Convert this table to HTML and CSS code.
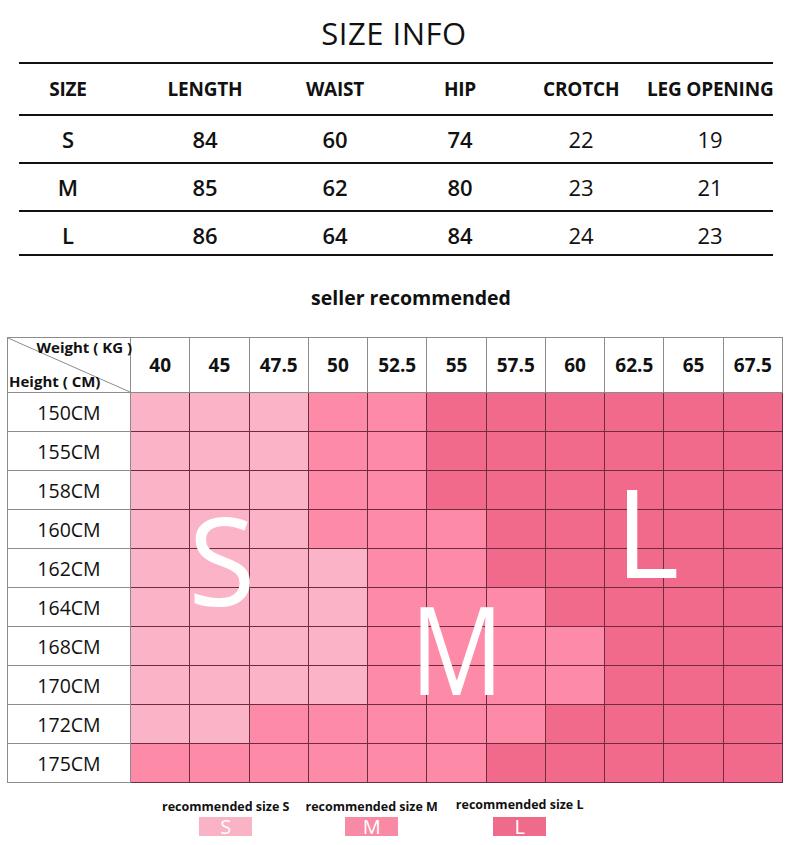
FILE: index.html
```html
<!DOCTYPE html>
<html>
<head>
<meta charset="utf-8">
<title>Size Info</title>
<link rel="stylesheet" href="styles.css">
</head>
<body>
<div class="page">
  <h1 class="title">SIZE INFO</h1>
  <div class="size-table">
    <div class="row head"><span>SIZE</span><span>LENGTH</span><span>WAIST</span><span>HIP</span><span>CROTCH</span><span>LEG OPENING</span></div>
    <div class="row"><span class="v1">S</span><span class="v1">84</span><span class="v1">60</span><span class="v1">74</span><span class="v2">22</span><span class="v2">19</span></div>
    <div class="row"><span class="v1">M</span><span class="v1">85</span><span class="v1">62</span><span class="v1">80</span><span class="v2">23</span><span class="v2">21</span></div>
    <div class="row last"><span class="v1">L</span><span class="v1">86</span><span class="v1">64</span><span class="v1">84</span><span class="v2">24</span><span class="v2">23</span></div>
  </div>

  <p class="seller">seller recommended</p>

  <div class="chart">
    <div class="corner">
      <svg class="diag" viewBox="0 0 100 100" preserveAspectRatio="none"><line x1="0" y1="0" x2="100" y2="100" stroke="#8c8c8c" stroke-width="1" vector-effect="non-scaling-stroke"/></svg>
      <span class="wt">Weight ( KG )</span>
      <span class="ht">Height ( CM)</span>
    </div>
    <div class="hd">40</div><div class="hd">45</div><div class="hd">47.5</div><div class="hd">50</div><div class="hd">52.5</div><div class="hd">55</div><div class="hd">57.5</div><div class="hd">60</div><div class="hd">62.5</div><div class="hd">65</div><div class="hd">67.5</div>

    <div class="lab">150CM</div><div class="c s"></div><div class="c s"></div><div class="c s"></div><div class="c m"></div><div class="c m"></div><div class="c l"></div><div class="c l"></div><div class="c l"></div><div class="c l"></div><div class="c l"></div><div class="c l"></div>
    <div class="lab">155CM</div><div class="c s"></div><div class="c s"></div><div class="c s"></div><div class="c m"></div><div class="c m"></div><div class="c l"></div><div class="c l"></div><div class="c l"></div><div class="c l"></div><div class="c l"></div><div class="c l"></div>
    <div class="lab">158CM</div><div class="c s"></div><div class="c s"></div><div class="c s"></div><div class="c m"></div><div class="c m"></div><div class="c l"></div><div class="c l"></div><div class="c l"></div><div class="c l"></div><div class="c l"></div><div class="c l"></div>
    <div class="lab">160CM</div><div class="c s"></div><div class="c s"></div><div class="c s"></div><div class="c m"></div><div class="c m"></div><div class="c m"></div><div class="c l"></div><div class="c l"></div><div class="c l"></div><div class="c l"></div><div class="c l"></div>
    <div class="lab">162CM</div><div class="c s"></div><div class="c s"></div><div class="c s"></div><div class="c s"></div><div class="c m"></div><div class="c m"></div><div class="c l"></div><div class="c l"></div><div class="c l"></div><div class="c l"></div><div class="c l"></div>
    <div class="lab">164CM</div><div class="c s"></div><div class="c s"></div><div class="c s"></div><div class="c s"></div><div class="c m"></div><div class="c m"></div><div class="c m"></div><div class="c l"></div><div class="c l"></div><div class="c l"></div><div class="c l"></div>
    <div class="lab">168CM</div><div class="c s"></div><div class="c s"></div><div class="c s"></div><div class="c s"></div><div class="c m"></div><div class="c m"></div><div class="c m"></div><div class="c m"></div><div class="c l"></div><div class="c l"></div><div class="c l"></div>
    <div class="lab">170CM</div><div class="c s"></div><div class="c s"></div><div class="c s"></div><div class="c s"></div><div class="c m"></div><div class="c m"></div><div class="c m"></div><div class="c m"></div><div class="c l"></div><div class="c l"></div><div class="c l"></div>
    <div class="lab">172CM</div><div class="c s"></div><div class="c s"></div><div class="c m"></div><div class="c m"></div><div class="c m"></div><div class="c m"></div><div class="c m"></div><div class="c l"></div><div class="c l"></div><div class="c l"></div><div class="c l"></div>
    <div class="lab">175CM</div><div class="c m"></div><div class="c m"></div><div class="c m"></div><div class="c m"></div><div class="c m"></div><div class="c m"></div><div class="c l"></div><div class="c l"></div><div class="c l"></div><div class="c l"></div><div class="c l"></div>

    <span class="big big-s">S</span>
    <span class="big big-m">M</span>
    <span class="big big-l">L</span>
  </div>

  <div class="legend">
    <div class="item">
      <span class="lg-label">recommended size S</span>
      <span class="swatch sw-s">S</span>
    </div>
    <div class="item item-m">
      <span class="lg-label">recommended size M</span>
      <span class="swatch sw-m">M</span>
    </div>
    <div class="item item-l">
      <span class="lg-label">recommended size L</span>
      <span class="swatch sw-l">L</span>
    </div>
  </div>
</div>
</body>
</html>
```
FILE: styles.css
```css
body {
  margin: 0;
  background: #fff;
  font-family: "Open Sans", "Noto Sans", sans-serif;
  color: #111;
}

.page {
  width: 788px;
  padding-top: 13px;
}

.title {
  margin: 0;
  font-size: 31px;
  font-weight: 400;
  line-height: 40px;
  text-align: center;
  letter-spacing: 0.5px;
}

/* ---- size table ---- */
.size-table {
  margin: 9px 0 0 19px;
  width: 754px;
  border-top: 2px solid #111;
}

.row {
  display: grid;
  grid-template-columns: 98px 176px 84px 166px 76px 154px;
  align-items: center;
  height: 46px;
  border-bottom: 2px solid #111;
  font-size: 22px;
}

.row > span {
  text-align: center;
  white-space: nowrap;
}

.row > span:last-child {
  padding-left: 28px;
}

.row.head {
  height: 50px;
  font-size: 19px;
  font-weight: 700;
  letter-spacing: -0.2px;
}

.row.last {
  height: 42px;
}

.row.last > span {
  position: relative;
  top: 2px;
}

.v1 { font-weight: 600; }
.v2 { font-weight: 400; }

/* ---- seller ---- */
.seller {
  margin: 30px 0 0;
  padding-left: 34px;
  text-align: center;
  font-size: 19.5px;
  font-weight: 700;
  line-height: 24px;
}

/* ---- chart ---- */
.chart {
  position: relative;
  margin: 27px 0 0 7px;
  width: 776px;
  box-sizing: border-box;
  border-top: 1px solid #8c8c8c;
  border-left: 1px solid #8c8c8c;
  display: grid;
  grid-template-columns: 123px repeat(11, 1fr);
  grid-template-rows: 55px repeat(10, 39px);
}

.chart > div {
  box-sizing: border-box;
  border-right: 1px solid #8c8c8c;
  border-bottom: 1px solid #8c8c8c;
}

.corner {
  position: relative;
}

.diag {
  position: absolute;
  left: 0;
  top: 0;
  width: 100%;
  height: 100%;
}

.wt, .ht {
  position: absolute;
  font-size: 15px;
  font-weight: 700;
  line-height: 18px;
  white-space: nowrap;
}

.wt { right: -2px; top: 0; }
.ht { left: 1px; bottom: 2px; }

.hd {
  display: flex;
  align-items: center;
  justify-content: center;
  font-size: 19px;
  font-weight: 700;
}

.lab {
  display: flex;
  align-items: center;
  justify-content: center;
  font-size: 19.5px;
  font-weight: 400;
}

.chart > .c {
  border-color: #6e2c40;
}

.s { background: #fab3c7; }
.m { background: #fd8aa7; }
.l { background: #f26a8b; }

.big {
  position: absolute;
  color: #fff;
  font-weight: 400;
  font-size: 123px;
  line-height: 1;
  width: 120px;
  text-align: center;
}

.big-s { left: 154px; top: 159px; }
.big-m { left: 389px; top: 248px; transform: scaleX(0.84); }
.big-l { left: 607px; top: 131px; text-align: left; }

/* ---- legend ---- */
.legend {
  display: flex;
  align-items: flex-start;
  margin-top: 16px;
  padding-left: 162px;
}

.item {
  display: flex;
  flex-direction: column;
  align-items: center;
}

.item-m { margin-left: 16px; }
.item-l { margin-left: 18px; margin-top: -2px; }
.item-l .swatch { margin-top: 4px; }

.lg-label {
  font-size: 12.5px;
  font-weight: 700;
  line-height: 16px;
  white-space: nowrap;
}

.swatch {
  width: 53px;
  height: 19px;
  margin-top: 2px;
  color: #fff;
  font-size: 20px;
  line-height: 19px;
  text-align: center;
}

.sw-s { background: #f9b3c5; }
.sw-m { background: #f98aa5; }
.sw-l { background: #ef6b8b; }
```
